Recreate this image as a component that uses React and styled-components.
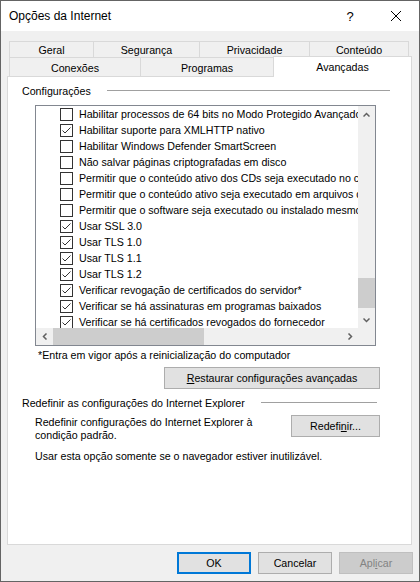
import React from 'react'
import styled, { createGlobalStyle } from 'styled-components'

const GlobalStyle = createGlobalStyle`
  * { box-sizing: border-box; }
  html, body { margin: 0; padding: 0; background: #fff; }
  body {
    font-family: 'Liberation Sans', Arial, sans-serif;
    font-size: 10.67px;
    color: #000;
  }
`

const Window = styled.div`
  width: 420px;
  height: 582px;
  border: 1px solid #646464;
  background: #f0f0f0;
  display: flex;
  flex-direction: column;
  overflow: hidden;
`

const TitleBar = styled.div`
  height: 30px;
  background: #fff;
  display: flex;
  align-items: center;
`

const Title = styled.div`
  flex: 1;
  padding-left: 8px;
  font-size: 12px;
`

const TitleButton = styled.div`
  width: 46px;
  height: 30px;
  display: flex;
  align-items: center;
  justify-content: center;
  font-size: 13px;
`

const Body = styled.div`
  flex: 1;
  display: flex;
  flex-direction: column;
  padding: 10px 7px 7px 6px;
`

const Tabs = styled.div`
  margin-left: 2px;
`

const TabRow = styled.div`
  display: flex;
  height: ${p => p.$h}px;
`

const Tab = styled.div`
  width: ${p => p.$w}px;
  height: ${p => p.$selected ? p.$h + 2 : p.$h}px;
  margin-top: ${p => p.$selected ? -1 : 0}px;
  border-top: 1px solid #d9d9d9;
  border-left: 1px solid #d9d9d9;
  border-right: ${p => p.$last ? '1px solid #d9d9d9' : 'none'};
  background: ${p => p.$selected ? '#fff' : '#f0f0f0'};
  display: flex;
  align-items: center;
  justify-content: center;
  padding-top: ${p => p.$pad || 0}px;
  position: ${p => p.$selected ? 'relative' : 'static'};
  z-index: ${p => p.$selected ? 1 : 'auto'};
`

const Panel = styled.div`
  flex: 1;
  background: #fff;
  border: 1px solid #d9d9d9;
  display: flex;
  flex-direction: column;
  padding-top: 7px;
`

const GroupHeader = styled.div`
  display: flex;
  align-items: center;
  height: 13px;
  margin: ${p => p.$top || 0}px ${p => p.$end}px 0 14px;
  white-space: nowrap;
`

const Rule = styled.div`
  flex: 1;
  height: 1px;
  margin-left: 16px;
  background: #a0a0a0;
`

const ListBox = styled.div`
  margin: 8px 0 0 27px;
  width: 341px;
  height: 241px;
  border: 1px solid #828790;
  display: grid;
  grid-template-columns: 1fr 17px;
  grid-template-rows: 1fr 17px;
`

const Viewport = styled.div`
  overflow: hidden;
  background: #fff;
`

const Item = styled.div`
  height: 16px;
  display: flex;
  align-items: center;
  gap: 6px;
  padding-left: 24px;
  white-space: nowrap;
`

const Box = styled.span`
  flex: none;
  width: 13px;
  height: 13px;
  border: 1px solid #333;
  background: #fff;
  display: flex;
`

const ScrollBar = styled.div`
  background: #f0f0f0;
  display: flex;
  flex-direction: ${p => p.$horizontal ? 'row' : 'column'};
`

const Arrow = styled.div`
  flex: none;
  width: 17px;
  height: 17px;
  display: flex;
  align-items: center;
  justify-content: center;
`

const Track = styled.div`
  flex: 1;
  display: flex;
  flex-direction: ${p => p.$horizontal ? 'row' : 'column'};
`

const Thumb = styled.div`
  flex: none;
  background: #cdcdcd;
  ${p => p.$horizontal
    ? `width: ${p.$size}px; margin-left: ${p.$offset}px;`
    : `height: ${p.$size}px; margin-top: ${p.$offset}px;`}
`

const Corner = styled.div`
  background: #f0f0f0;
`

const Note = styled.div`
  margin: 3px 0 0 30px;
  line-height: 13px;
`

const Button = styled.button`
  font-family: inherit;
  font-size: 10.67px;
  height: 22px;
  width: ${p => p.$w}px;
  padding: 0;
  color: ${p => p.$variant === 'disabled' ? '#838383' : '#000'};
  background: ${p => p.$variant === 'disabled' ? '#cccccc' : '#e1e1e1'};
  border: ${p => p.$variant === 'primary' ? '2px solid #0078d7'
    : p.$variant === 'disabled' ? '1px solid #bfbfbf' : '1px solid #adadad'};
`

const RestoreButton = styled(Button)`
  align-self: flex-end;
  margin: 5px 31px 0 0;
`

const ResetRow = styled.div`
  display: flex;
  justify-content: space-between;
  align-items: flex-start;
  margin: 6px 31px 0 27px;
`

const Paragraph = styled.div`
  width: 235px;
  line-height: 13px;
  margin-top: ${p => p.$top || 0}px;
  margin-left: ${p => p.$left || 0}px;
`

const Footer = styled.div`
  display: flex;
  justify-content: flex-end;
  gap: 7px;
  margin: 7px -1px 0 0;
`

const Key = styled.span`
  text-decoration: underline;
`

const items = [
  ['Habilitar processos de 64 bits no Modo Protegido Avançado', false],
  ['Habilitar suporte para XMLHTTP nativo', true],
  ['Habilitar Windows Defender SmartScreen', false],
  ['Não salvar páginas criptografadas em disco', false],
  ['Permitir que o conteúdo ativo dos CDs seja executado no computador', false],
  ['Permitir que o conteúdo ativo seja executado em arquivos do computador', false],
  ['Permitir que o software seja executado ou instalado mesmo se a assinatura for inválida', false],
  ['Usar SSL 3.0', true],
  ['Usar TLS 1.0', true],
  ['Usar TLS 1.1', true],
  ['Usar TLS 1.2', true],
  ['Verificar revogação de certificados do servidor*', true],
  ['Verificar se há assinaturas em programas baixados', true],
  ['Verificar se há certificados revogados do fornecedor', true],
]

const Chevron = ({ dir }) => {
  const pts = {
    up: '0.5,4.5 3.5,1.5 6.5,4.5',
    down: '0.5,1.5 3.5,4.5 6.5,1.5',
    left: '4.5,0.5 1.5,3.5 4.5,6.5',
    right: '1.5,0.5 4.5,3.5 1.5,6.5',
  }[dir]
  const vertical = dir === 'up' || dir === 'down'
  return (
    <svg width={vertical ? 7 : 6} height={vertical ? 6 : 7} viewBox={vertical ? '0 0 7 6' : '0 0 6 7'}>
      <polyline points={pts} fill="none" stroke="#606060" strokeWidth="1.5" />
    </svg>
  )
}

const Check = ({ checked }) => (
  <Box>
    {checked && (
      <svg width="11" height="11" viewBox="0 0 11 11">
        <polyline points="1.5,5.5 4,8 9.5,2.5" fill="none" stroke="#333" strokeWidth="1" />
      </svg>
    )}
  </Box>
)

const App = () => (
  <>
    <GlobalStyle />
    <Window>
      <TitleBar>
        <Title>Opções da Internet</Title>
        <TitleButton>?</TitleButton>
        <TitleButton>
          <svg width="10" height="10" viewBox="0 0 10 10">
            <path d="M0 0L10 10M10 0L0 10" stroke="#000" strokeWidth="1" />
          </svg>
        </TitleButton>
      </TitleBar>
      <Body>
        <Tabs>
          <TabRow $h={16}>
            <Tab $w={84} $h={16}>Geral</Tab>
            <Tab $w={106} $h={16}>Segurança</Tab>
            <Tab $w={110} $h={16}>Privacidade</Tab>
            <Tab $w={100} $h={16} $last>Conteúdo</Tab>
          </TabRow>
          <TabRow $h={19}>
            <Tab $w={131} $h={19} $pad={2}>Conexões</Tab>
            <Tab $w={133} $h={19} $pad={2}>Programas</Tab>
            <Tab $w={139} $h={19} $last $selected>Avançadas</Tab>
          </TabRow>
        </Tabs>
        <Panel>
          <GroupHeader $end={21}>
            Configurações
            <Rule />
          </GroupHeader>
          <ListBox>
            <Viewport>
              {items.map(([label, checked]) => (
                <Item key={label}>
                  <Check checked={checked} />
                  {label}
                </Item>
              ))}
            </Viewport>
            <ScrollBar>
              <Arrow><Chevron dir="up" /></Arrow>
              <Track>
                <Thumb $offset={155} $size={30} />
              </Track>
              <Arrow><Chevron dir="down" /></Arrow>
            </ScrollBar>
            <ScrollBar $horizontal>
              <Arrow><Chevron dir="left" /></Arrow>
              <Track $horizontal>
                <Thumb $horizontal $offset={0} $size={151} />
              </Track>
              <Arrow><Chevron dir="right" /></Arrow>
            </ScrollBar>
            <Corner />
          </ListBox>
          <Note>*Entra em vigor após a reinicialização do computador</Note>
          <RestoreButton $w={216}>
            <Key>R</Key>estaurar configurações avançadas
          </RestoreButton>
          <GroupHeader $end={34} $top={7}>
            Redefinir as configurações do Internet Explorer
            <Rule />
          </GroupHeader>
          <ResetRow>
            <Paragraph $top={1}>
              Redefinir configurações do Internet Explorer à condição padrão.
            </Paragraph>
            <Button $w={89}>
              Redefi<Key>n</Key>ir...
            </Button>
          </ResetRow>
          <Paragraph $top={8} $left={27} style={{ width: 'auto' }}>
            Usar esta opção somente se o navegador estiver inutilizável.
          </Paragraph>
        </Panel>
        <Footer>
          <Button $w={74} $variant="primary">OK</Button>
          <Button $w={74}>Cancelar</Button>
          <Button $w={74} $variant="disabled">Apl<Key>i</Key>car</Button>
        </Footer>
      </Body>
    </Window>
  </>
)

export default App
